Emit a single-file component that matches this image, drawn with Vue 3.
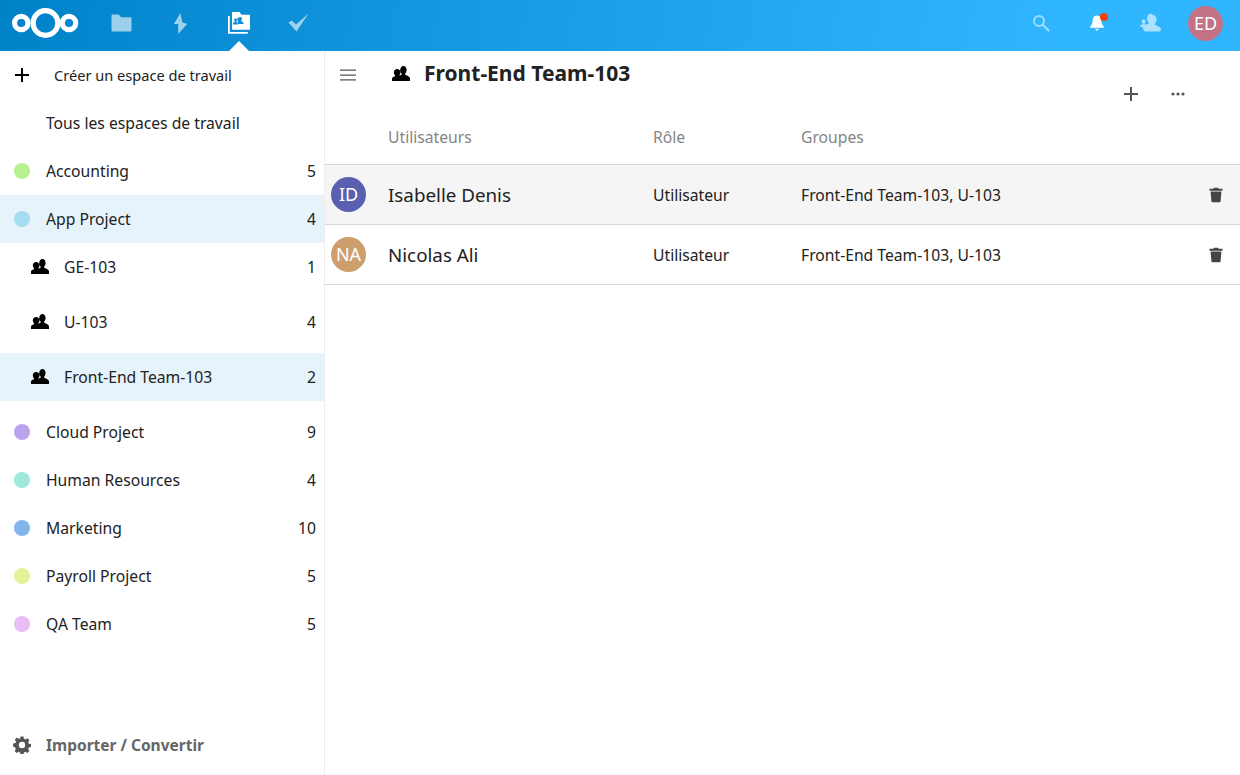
<script setup>
const spaces = [
  { name: "Accounting", count: 5, color: "#b5f28e" },
  { name: "App Project", count: 4, color: "#a5dcf0", open: true },
  { name: "Cloud Project", count: 9, color: "#bba3ec" },
  { name: "Human Resources", count: 4, color: "#a0e8da" },
  { name: "Marketing", count: 10, color: "#82b4ea" },
  { name: "Payroll Project", count: 5, color: "#e3f29a" },
  { name: "QA Team", count: 5, color: "#e8bdf3" },
];

const groups = [
  { name: "GE-103", count: 1 },
  { name: "U-103", count: 4 },
  { name: "Front-End Team-103", count: 2, active: true },
];

const users = [
  { initials: "ID", name: "Isabelle Denis", color: "#5b5fb0", hover: true },
  { initials: "NA", name: "Nicolas Ali", color: "#cd9f6e" },
];

const teamIcon =
  "M11.5 1C9.6 1 8.2 2.800 8.200 5c0 1.500.6 2.700 1.400 3.400v1.300c-.7.3-1.500.5-2.200.8V9.900c.7-.6 1.100-1.500 1.100-2.500C8.500 5.600 7 4 5.100 4 3.300 4 1.800 5.600 1.800 7.400c0 1 .4 1.900 1.100 2.500v1.300C1.400 11.700 0 12.300 0 13.700V16h18v-2.600c0-1.700-3-2.800-4.800-3.600V8.400c.8-.7 1.400-1.900 1.400-3.400 0-2.200-1.200-4-3.100-4z";
</script>

<template>
  <div class="page">
    <header class="topbar">
      <svg class="logo" width="68" height="32" viewBox="0 0 68 32">
        <circle cx="9.300" cy="16" r="6.700" />
        <circle cx="33.500" cy="16" r="12.400" />
        <circle cx="57" cy="16" r="6.700" />
      </svg>
      <nav class="apps">
        <svg class="app dim" width="22" height="22" viewBox="0 0 22 22">
          <path d="M1 3.500c0-.5.4-.9.9-.9h6.400l2.200 2.600h9.600c.5 0 .9.4.9.9v12.400c0 .5-.4.9-.9.900H1.900c-.5 0-.9-.4-.9-.9z" />
        </svg>
        <svg class="app dim" width="22" height="22" viewBox="0 0 22 22">
          <path d="M11 1 4.300 12h4.400v10l9-10-5-1.700z" />
        </svg>
        <span class="app current">
          <svg width="24" height="24" viewBox="0 0 24 24">
            <path d="M1 5h1.800v16h18v1.800H1z" />
            <path fill-rule="evenodd" d="M5 1h7.500l2 2.700H23v15.100H5zM12 6.500a1.800 1.800 0 0 0-1.800 1.900c0 .8.300 1.300.8 1.700v.7c-.3.100-.6.300-.9.500.6.400 1.100.9 1.200 1.700h5.200v-1c0-.9-1.300-1.400-2.300-1.800v-.6c.5-.4.800-.9.800-1.700a1.800 1.800 0 0 0-2-1.900zm-3.400 1a1.500 1.500 0 0 0-1.500 1.600c0 .6.200 1.100.7 1.500v.5c-.8.300-1.800.7-1.800 1.500v1h5.100v-.5c0-.9-.9-1.300-1.700-1.700v-.8c.4-.4.600-.9.600-1.500 0-.9-.5-1.600-1.400-1.600z" />
          </svg>
        </span>
        <svg class="app dim" width="22" height="22" viewBox="0 0 22 22">
          <path d="M1 10.500 4 8.500l4.500 4L21 1.500 9 19.500z" />
        </svg>
      </nav>
      <div class="right">
        <svg class="tool faint" width="18" height="18" viewBox="0 0 18 18">
          <circle cx="7" cy="7" r="5" fill="none" stroke="#fff" stroke-width="2" />
          <path d="m10.800 10.800 5.700 5.700" stroke="#fff" stroke-width="2" stroke-linecap="round" />
        </svg>
        <span class="bell">
          <svg width="18" height="20" viewBox="0 0 18 20">
            <path d="M9 2.500c-2.700 0-4.300 2-4.300 4.500 0 3.600-1.100 5.200-2.500 6.500v1.200h13.600v-1.200c-1.400-1.300-2.500-2.900-2.500-6.500 0-2.500-1.600-4.500-4.300-4.500zM6.800 15.800h4.400L9 18z" />
          </svg>
          <i class="dot"></i>
        </span>
        <svg class="tool contacts" width="22" height="22" viewBox="0 0 22 22">
          <path d="M12 1.500c-2.400 0-4 2.200-4 4.800 0 1.800.7 3.200 1.700 4l-.1 1.500c-.7.300-2 .8-2 .8l-2-.2v-1.100c.6-.4 1-1.100 1-1.900 0-1.200-.8-2.200-2-2.200s-2 1-2 2.200c0 .8.300 1.500 1 1.900v1.200c-1 .3-2.600.8-2.600 1.500 0 .7 1.500 1.100 3 1.400.2 1.800.8 3.100 2 4.100h13.300c1.500 0 2.700-.6 2.700-2s-1-2.400-2.600-3.100c-1-.5-2.300-.9-3.400-1.300l-.1-1.600c1-.8 1.700-2.200 1.700-4 0-2.600-1.600-4.800-4-4.800z" />
        </svg>
        <span class="me">ED</span>
      </div>
    </header>

    <div class="body">
      <aside class="side">
        <div class="row create">
          <svg class="plus" width="16" height="16" viewBox="0 0 16 16">
            <path d="M7 1h2v6h6v2H9v6H7V9H1V7h6z" />
          </svg>
          <span>Créer un espace de travail</span>
        </div>
        <div class="row"><span class="bullet"></span><span class="label">Tous les espaces de travail</span></div>

        <template v-for="space in spaces" :key="space.name">
          <div class="row" :class="{ active: space.open }">
            <span class="bullet"><i :style="{ background: space.color }"></i></span>
            <span class="label">{{ space.name }}</span>
            <span class="count">{{ space.count }}</span>
          </div>
          <div v-if="space.open" class="subs">
            <div v-for="g in groups" :key="g.name" class="row sub" :class="{ active: g.active }">
              <svg width="18" height="18" viewBox="0 0 18 18"><path :d="teamIcon" /></svg>
              <span class="label">{{ g.name }}</span>
              <span class="count">{{ g.count }}</span>
            </div>
          </div>
        </template>

        <div class="import">
          <svg width="18" height="18" viewBox="0 0 18 18">
            <path fill-rule="evenodd" d="M7.500 0.500h3l.4 2.300c.5.200 1 .4 1.400.7l2-1.300 2.100 2.100-1.300 2c.3.400.5.900.7 1.400l2.300.4v3l-2.300.4c-.2.500-.4 1-.7 1.400l1.300 2-2.100 2.100-2-1.300c-.4.300-.9.500-1.400.7l-.4 2.300h-3l-.4-2.300c-.5-.2-1-.4-1.400-.7l-2 1.300-2.100-2.100 1.300-2c-.3-.4-.5-.9-.7-1.400L.1 10.500v-3l2.300-.4c.2-.5.400-1 .7-1.400l-1.300-2 2.100-2.100 2 1.300c.4-.3.900-.5 1.400-.7zM9 5.800a3.200 3.200 0 1 0 0 6.400 3.200 3.200 0 0 0 0-6.400z" />
          </svg>
          <span>Importer / Convertir</span>
        </div>
      </aside>

      <main class="main">
        <div class="title-bar">
          <svg class="burger" width="18" height="14" viewBox="0 0 18 14">
            <path d="M1 1.500h16v1.300H1zM1 6.400h16v1.300H1zM1 11.300h16v1.300H1z" />
          </svg>
          <svg class="title-icon" width="18" height="18" viewBox="0 0 18 18"><path :d="teamIcon" /></svg>
          <h1>Front-End Team-103</h1>
          <div class="actions">
            <svg width="16" height="16" viewBox="0 0 16 16"><path d="M7 1h2v6h6v2H9v6H7V9H1V7h6z" /></svg>
            <svg width="16" height="16" viewBox="0 0 16 16">
              <circle cx="3" cy="8" r="1.600" /><circle cx="8" cy="8" r="1.600" /><circle cx="13" cy="8" r="1.600" />
            </svg>
          </div>
        </div>

        <div class="grid head">
          <span></span>
          <span>Utilisateurs</span>
          <span>Rôle</span>
          <span>Groupes</span>
        </div>
        <div v-for="u in users" :key="u.name" class="grid user" :class="{ hover: u.hover }">
          <span class="avatar" :style="{ background: u.color }">{{ u.initials }}</span>
          <span class="name">{{ u.name }}</span>
          <span>Utilisateur</span>
          <span>Front-End Team-103, U-103</span>
          <svg class="trash" width="16" height="16" viewBox="0 0 16 16">
            <path d="M6 .8h4l.6 1H14.500v2h-13v-2h3.900zM2.600 4.600h10.800l-.8 9.700c0 .5-.4.900-.9.900H4.300c-.5 0-.9-.4-.9-.9z" />
          </svg>
        </div>
      </main>
    </div>
  </div>
</template>

<style>
html,
body {
  margin: 0;
  background: #fff;
}
</style>

<style scoped>
.page {
  width: 1240px;
  height: 775px;
  display: flex;
  flex-direction: column;
  overflow: hidden;
  font-family: "Noto Sans", "Open Sans", sans-serif;
  font-size: 15.700px;
  color: #222;
}

.topbar {
  height: 51px;
  flex: none;
  box-sizing: border-box;
  padding-bottom: 5px;
  display: flex;
  align-items: center;
  background: linear-gradient(100deg, #0082c9 0%, #30b6ff 85%);
}

.logo {
  margin-left: 12px;
  fill: none;
  stroke: #fff;
  stroke-width: 5.200;
}

.apps {
  display: flex;
  align-items: center;
  margin-left: 12px;
}

.app {
  width: 59px;
  flex: none;
  fill: #fff;
}

.dim {
  opacity: 0.6;
}

.current {
  position: relative;
  height: 46px;
  display: flex;
  align-items: center;
  justify-content: center;
  padding-right: 2px;
  box-sizing: border-box;
}

.current::after {
  content: "";
  position: absolute;
  left: 50%;
  bottom: -5px;
  margin-left: -11px;
  border: 10px solid transparent;
  border-top: 0;
  border-bottom-color: #fff;
}

.right {
  margin-left: auto;
  display: flex;
  align-items: center;
  padding-right: 17px;
}

.faint {
  opacity: 0.55;
}

.tool {
  flex: none;
}

.bell {
  position: relative;
  display: flex;
  margin-left: 38px;
  fill: #fff;
}

.dot {
  position: absolute;
  top: 0;
  right: -2px;
  width: 8px;
  height: 8px;
  border-radius: 50%;
  background: #f2400c;
}

.contacts {
  margin-left: 33px;
  fill: #fff;
  opacity: 0.6;
}

.me {
  width: 35px;
  height: 35px;
  margin-left: 27px;
  border-radius: 50%;
  background: #c47285;
  color: #fff;
  font-size: 18px;
  line-height: 35px;
  text-align: center;
}

.body {
  flex: 1;
  display: flex;
  min-height: 0;
}

.side {
  width: 324px;
  flex: none;
  display: flex;
  flex-direction: column;
  border-right: 1px solid #ededed;
}

.row {
  height: 48px;
  flex: none;
  display: flex;
  align-items: center;
  padding: 0 8px 0 14px;
}

.create {
  font-size: 14.600px;
}

.plus {
  margin-right: 24px;
  fill: #000;
}

.bullet {
  width: 32px;
  display: flex;
  flex: none;
}

.bullet i {
  width: 16px;
  height: 16px;
  border-radius: 50%;
}

.label {
  flex: 1;
}

.active {
  background: #e6f3fa;
}

.subs {
  display: flex;
  flex-direction: column;
  gap: 7px;
  margin-bottom: 7px;
}

.sub {
  padding-left: 31px;
}

.sub svg {
  margin-right: 15px;
  fill: #000;
}

.import {
  margin-top: auto;
  height: 60px;
  display: flex;
  align-items: center;
  padding-left: 13px;
  gap: 15px;
  font-weight: 700;
  font-size: 15.500px;
  color: #666;
}

.import svg {
  fill: #555;
}

.main {
  flex: 1;
  min-width: 0;
}

.title-bar {
  height: 59px;
  display: flex;
  align-items: flex-start;
  padding-top: 11px;
  box-sizing: border-box;
}

.burger {
  margin: 6px 0 0 14px;
  fill: #555;
}

.title-icon {
  margin: 3px 0 0 35px;
  fill: #000;
}

h1 {
  margin: 0 0 0 14px;
  font-size: 21px;
  line-height: 22px;
  font-weight: 700;
}

.actions {
  margin-left: auto;
  display: flex;
  gap: 31px;
  padding: 24px 54px 0 0;
  fill: #555;
}

.grid {
  display: grid;
  grid-template-columns: 57px 265px 148px 1fr 16px;
  align-items: center;
  padding: 0 16px 0 6px;
  border-bottom: 1px solid #d8d8d8;
}

.head {
  height: 54px;
  color: #858585;
}

.user {
  height: 59px;
}

.hover {
  background: #f5f5f5;
}

.avatar {
  width: 35px;
  height: 35px;
  border-radius: 50%;
  color: #fff;
  font-size: 18px;
  line-height: 35px;
  text-align: center;
}

.name {
  font-size: 18.800px;
}

.trash {
  fill: #444;
}
</style>
